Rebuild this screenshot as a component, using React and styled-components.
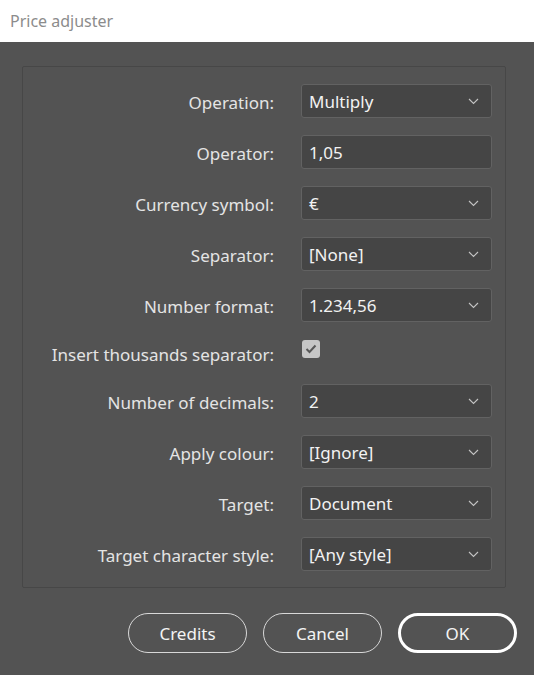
import React from 'react';
import styled, { createGlobalStyle } from 'styled-components';

const Global = createGlobalStyle`
  html, body { margin: 0; padding: 0; background: #535353; }
  body { font-family: "Noto Sans", "Open Sans", sans-serif; }
  * { box-sizing: border-box; }
`;

const Window = styled.div`
  width: 534px;
  height: 675px;
  display: flex;
  flex-direction: column;
  background: #535353;
`;

const TitleBar = styled.div`
  height: 42px;
  background: #ffffff;
  color: #8c8c8c;
  font-size: 16px;
  padding: 10px 0 0 10px;
`;

const Body = styled.div`
  flex: 1;
  padding: 24px 28px 0 22px;
  display: flex;
  flex-direction: column;
`;

const Panel = styled.div`
  border: 1px solid #474747;
  border-radius: 2px;
  padding: 17px 13px 16px 13px;
  display: grid;
  grid-template-columns: 1fr 191px;
  column-gap: 27px;
  row-gap: 17px;
  align-items: center;
`;

const Label = styled.div`
  text-align: right;
  color: #e4e4e4;
  font-size: 17px;
  white-space: nowrap;
  padding-top: 2px;
`;

const Field = styled.div`
  height: 34px;
  background: #454545;
  border: 1px solid #626262;
  border-radius: 3px;
  display: flex;
  align-items: center;
  justify-content: space-between;
  padding: 1px 12px 0 7px;
  color: #f2f2f2;
  font-size: 17px;
`;

const CheckCell = styled.div`
  height: 28px;
  display: flex;
  align-items: flex-start;
  padding: 1px 0 0 1px;
`;

const CheckBox = styled.div`
  width: 18px;
  height: 18px;
  border-radius: 3px;
  background: #c6c6c6;
  display: flex;
  align-items: center;
  justify-content: center;
`;

const Footer = styled.div`
  display: flex;
  justify-content: flex-end;
  gap: 16px;
  margin: 25px -11px 0 0;
`;

const Button = styled.button`
  width: 119px;
  height: 40px;
  border-radius: 20px;
  background: transparent;
  border: ${p => (p.$primary ? '3px solid #ffffff' : '1px solid #d8d8d8')};
  color: #f4f4f4;
  font-family: inherit;
  font-size: 17px;
  padding: 0;
`;

const Chevron = () => (
  <svg width="11" height="7" viewBox="0 0 11 7">
    <path d="M1 1 L5.5 5.5 L10 1" fill="none" stroke="#c4c4c4" strokeWidth="1.1" />
  </svg>
);

const Check = () => (
  <svg width="12" height="10" viewBox="0 0 12 10">
    <path d="M1.5 5 L4.5 8 L10.5 1.5" fill="none" stroke="#575757" strokeWidth="2" />
  </svg>
);

const rows = [
  { label: 'Operation:', value: 'Multiply', select: true },
  { label: 'Operator:', value: '1,05' },
  { label: 'Currency symbol:', value: '€', select: true },
  { label: 'Separator:', value: '[None]', select: true },
  { label: 'Number format:', value: '1.234,56', select: true },
  { label: 'Insert thousands separator:', check: true },
  { label: 'Number of decimals:', value: '2', select: true },
  { label: 'Apply colour:', value: '[Ignore]', select: true },
  { label: 'Target:', value: 'Document', select: true },
  { label: 'Target character style:', value: '[Any style]', select: true },
];

export default function App() {
  return (
    <Window>
      <Global />
      <TitleBar>Price adjuster</TitleBar>
      <Body>
        <Panel>
          {rows.map(r => (
            <React.Fragment key={r.label}>
              <Label>{r.label}</Label>
              {r.check ? (
                <CheckCell>
                  <CheckBox><Check /></CheckBox>
                </CheckCell>
              ) : (
                <Field>
                  <span>{r.value}</span>
                  {r.select && <Chevron />}
                </Field>
              )}
            </React.Fragment>
          ))}
        </Panel>
        <Footer>
          <Button>Credits</Button>
          <Button>Cancel</Button>
          <Button $primary>OK</Button>
        </Footer>
      </Body>
    </Window>
  );
}
